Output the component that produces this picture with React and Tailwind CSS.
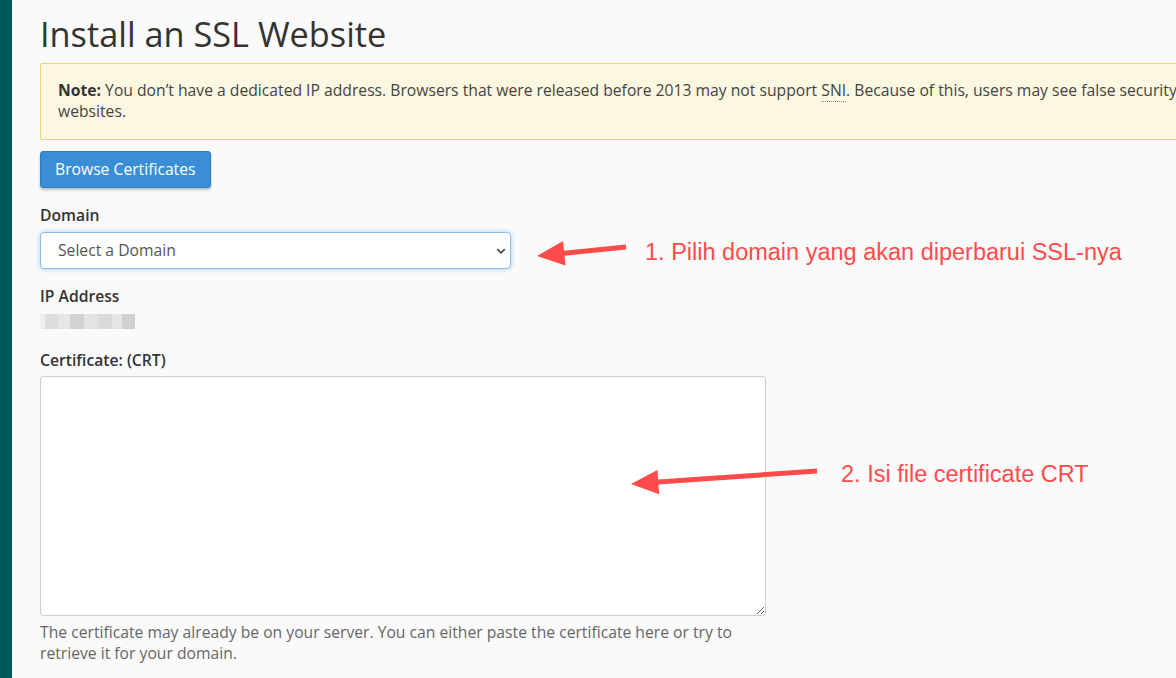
const Arrow = ({ className, x1, y1, x2, y2 }) => {
  // line from tail (x1,y1) to head (x2,y2), drawn in svg coords
  const angle = Math.atan2(y2 - y1, x2 - x1);
  const len = 30;
  const spread = 0.42;
  const ax = x2 - len * Math.cos(angle - spread);
  const ay = y2 - len * Math.sin(angle - spread);
  const bx = x2 - len * Math.cos(angle + spread);
  const by = y2 - len * Math.sin(angle + spread);
  const bodyEndX = x2 - 20 * Math.cos(angle);
  const bodyEndY = y2 - 20 * Math.sin(angle);
  return (
    <svg className={className} width="1176" height="678" viewBox="0 0 1176 678">
      <line x1={x1} y1={y1} x2={bodyEndX} y2={bodyEndY} stroke="#ff4b4b" strokeWidth="5" strokeLinecap="butt" />
      <polygon points={`${x2},${y2} ${ax},${ay} ${bx},${by}`} fill="#ff4b4b" />
    </svg>
  );
};

const App = () => {
  return (
    <div className="relative w-[1176px] h-[678px] overflow-hidden bg-[#fafafa] flex" style={{ fontFamily: '"Open Sans", sans-serif' }}>
      <div className="w-[12px] shrink-0 bg-[#00585a]" />

      <div className="pl-[28px] pt-[9px] w-[1400px] shrink-0 text-[#333]">
        <h1 className="text-[34.3px] leading-[50px] text-[#333] font-normal">Install an SSL Website</h1>

        <div className="mt-[4px] w-[1360px] border border-[#f2d36a] bg-[#fcf7e1] rounded-[2px] px-[17px] pt-[16px] pb-[17px] text-[15.7px] leading-[21px] text-[#444]">
          <div className="whitespace-nowrap">
            <strong className="font-bold text-[#333]">Note:</strong> You don’t have a dedicated IP address. Browsers that were released before 2013 may not support{" "}
            <abbr className="no-underline border-b border-dotted border-[#888]" title="Server Name Indication">SNI</abbr>. Because of this, users may see false security warnings when they visit your SSL
          </div>
          <div>websites.</div>
        </div>

        <button className="mt-[11px] h-[37px] px-[14px] bg-[#3a8ed6] text-white text-[15.7px] rounded-[3px] border border-[#2f7fc4] shadow-[0_2px_3px_rgba(0,0,0,0.25)]">
          Browse Certificates
        </button>

        <div className="mt-[17px] text-[15.7px] font-semibold leading-[21px] text-[#333]">Domain</div>
        <div className="mt-[6px] relative w-[471px] h-[37px] bg-white border border-[#8fbbe6] rounded-[4px] shadow-[0_0_5px_rgba(102,175,233,0.55)] flex items-center pl-[17px] text-[15.7px] text-[#555]">
          <span>Select a Domain</span>
          <svg className="absolute right-[4px] top-[15px]" width="10" height="7" viewBox="0 0 10 7">
            <path d="M1.2 1.2 L5 4.8 L8.8 1.2" fill="none" stroke="#444" strokeWidth="1.7" />
          </svg>
        </div>

        <div className="mt-[17px] text-[15.7px] font-semibold leading-[21px] text-[#333]">IP Address</div>
        <div className="mt-[7px] flex h-[15px] w-[95px]">
          <div className="w-[5px] bg-[#eeeeee]" />
          <div className="w-[13px] bg-[#dcdcdc]" />
          <div className="w-[12px] bg-[#e6e6e6]" />
          <div className="w-[14px] bg-[#d2d2d2]" />
          <div className="w-[14px] bg-[#e3e3e3]" />
          <div className="w-[14px] bg-[#dadada]" />
          <div className="w-[10px] bg-[#e6e6e6]" />
          <div className="w-[13px] bg-[#d0d0d0]" />
        </div>

        <div className="mt-[21px] text-[15.7px] font-semibold leading-[21px] text-[#333]">Certificate: (CRT)</div>
        <textarea className="mt-[5px] block w-[726px] h-[240px] bg-white border border-[#cfcfcf] rounded-[3px] resize" />
        <p className="mt-[6px] w-[740px] text-[15.7px] leading-[21px] text-[#666]">
          The certificate may already be on your server. You can either paste the certificate here or try to retrieve it for your domain.
        </p>
      </div>

      <Arrow className="absolute left-0 top-0 pointer-events-none" x1={626} y1={247} x2={537} y2={256} />
      <Arrow className="absolute left-0 top-0 pointer-events-none" x1={817} y1={471} x2={631} y2={484} />

      <div className="absolute left-[645px] top-[237px] text-[23.5px] leading-[30px] text-[#ff4b4b]" style={{ fontFamily: '"Liberation Sans", Arial, sans-serif' }}>
        1. Pilih domain yang akan diperbarui SSL-nya
      </div>
      <div className="absolute left-[841px] top-[459px] text-[23.5px] leading-[30px] text-[#ff4b4b]" style={{ fontFamily: '"Liberation Sans", Arial, sans-serif' }}>
        2. Isi file certificate CRT
      </div>
    </div>
  );
};

export default App;
